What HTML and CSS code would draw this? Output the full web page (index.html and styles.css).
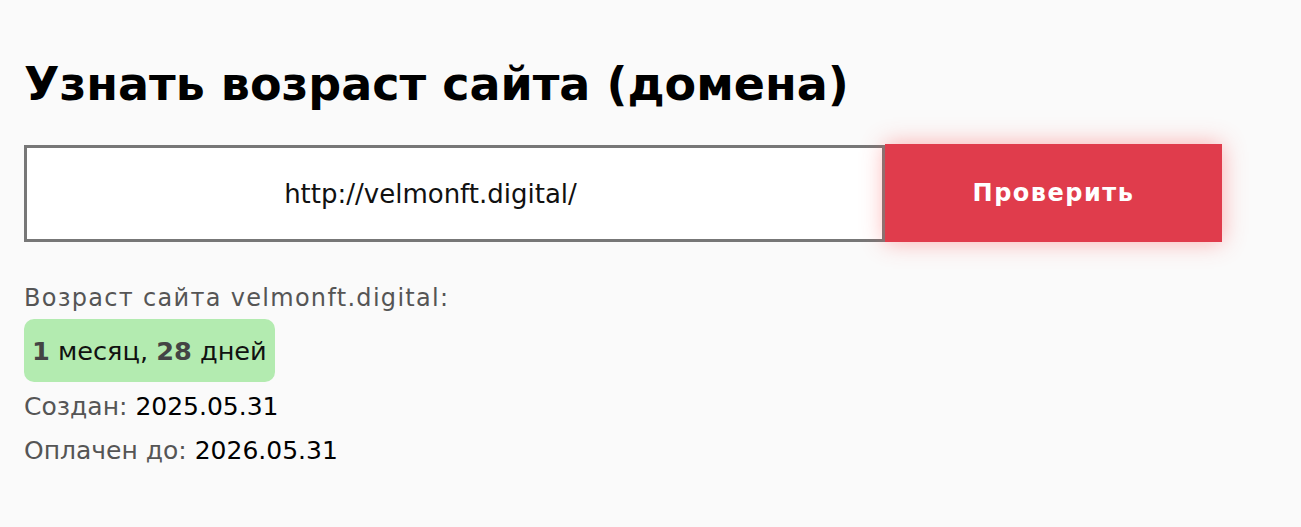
FILE: index.html
```html
<!DOCTYPE html>
<html lang="ru">
<head>
  <meta charset="UTF-8">
  <title>Узнать возраст сайта</title>
  <link rel="stylesheet" href="styles.css">
</head>
<body>
  <div class="page">
    <h1 class="page-title">Узнать возраст сайта (домена)</h1>
    <form class="check-form">
      <input type="text" class="check-input" value="http://velmonft.digital/">
      <button type="button" class="check-btn">Проверить</button>
    </form>
    <div class="result">
      <div class="result-label">Возраст сайта velmonft.digital:</div>
      <div class="age-badge"><b>1</b> месяц, <b>28</b> дней</div>
      <div class="result-rows">
        <div class="result-row">Создан: <span>2025.05.31</span></div>
        <div class="result-row">Оплачен до: <span>2026.05.31</span></div>
      </div>
    </div>
  </div>
</body>
</html>
```

FILE: styles.css
```css
body {
  margin: 0;
  background: #fafafa;
  font-family: 'DejaVu Sans', sans-serif;
  color: #111;
}
.page {
  padding: 52px 24px 0 24px;
}
.page-title {
  margin: 0 0 28px 0;
  font-size: 46px;
  font-weight: 700;
  line-height: 64px;
  color: #000;
}
/* Search row: input + button */
.check-form {
  display: flex;
  width: 1198px;
  height: 98px;
  margin-bottom: 40px;
}
.check-input {
  flex: 1;
  box-sizing: border-box;
  height: 97px;
  margin-top: 1px;
  padding: 0 48px 0 0;
  border: 3px solid #777;
  background: #fff;
  text-align: center;
  font-family: inherit;
  font-size: 26px;
  color: #111;
  outline: none;
}
.check-btn {
  width: 337px;
  height: 98px;
  border: none;
  background: #e03c4c;
  color: #fff;
  font-family: inherit;
  font-size: 24px;
  font-weight: 700;
  letter-spacing: 1.5px;
  box-shadow: 0 0 22px rgba(255, 80, 80, 0.45);
  cursor: pointer;
}
/* Result block */
.result {
  color: #555;
}
.result-label {
  font-size: 24px;
  letter-spacing: 1.3px;
  line-height: 32px;
  margin-bottom: 5px;
}
.age-badge {
  display: inline-block;
  padding: 15px 8px 13px;
  background: #b3ebb0;
  border-radius: 10px;
  font-size: 25.6px;
  line-height: 35px;
  color: #111;
}
.age-badge b {
  color: #444;
}
.result-rows {
  padding-top: 3px;
  font-size: 25px;
}
.result-row {
  line-height: 44px;
}
.result-row span {
  color: #000;
}
```
